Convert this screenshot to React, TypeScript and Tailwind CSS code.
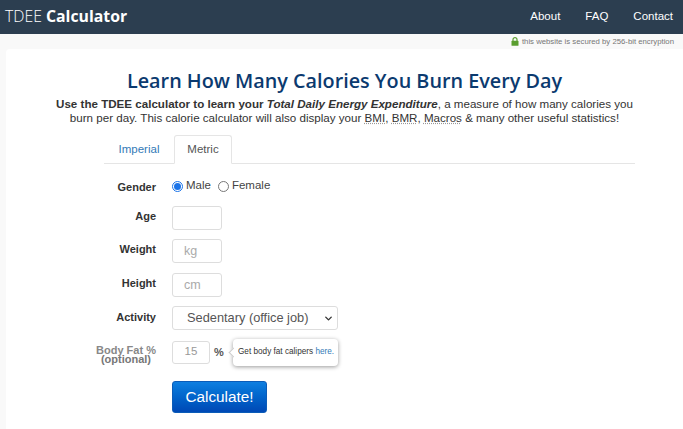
import { ChevronDown } from 'lucide-react';

const sans = "font-['Liberation_Sans',Arial,sans-serif]";

function Row({ label, children, className = '', labelClass = '-mt-[4px]' }: { label: string; children: React.ReactNode; className?: string; labelClass?: string }) {
  return (
    <div className={`flex items-center ${className}`}>
      <label className={`w-[52px] ml-[104px] text-right text-[11px] font-bold text-[#333] ${labelClass}`}>{label}</label>
      <div className="ml-[16px] flex items-center">{children}</div>
    </div>
  );
}

function Box({ placeholder }: { placeholder?: string }) {
  return (
    <div className="w-[50px] h-[24px] border border-[#ddd] rounded-[3px] bg-white pl-[11px] flex items-center text-[12.5px] text-[#aaa]">
      {placeholder}
    </div>
  );
}

export default function App() {
  return (
    <div className={`w-[683px] h-[429px] overflow-hidden bg-[#f9f9f9] ${sans}`}>
      {/* Header */}
      <div className="h-[34px] bg-[#2c3e50] flex items-center justify-between pl-[5px] pr-[10px]">
        <div className="text-[15.8px] text-white font-['Open_Sans',sans-serif]">
          <span className="font-light">TDEE</span> <span className="font-bold">Calculator</span>
        </div>
        <div className="flex gap-[25px] text-[11.5px] text-white">
          <span>About</span>
          <span>FAQ</span>
          <span>Contact</span>
        </div>
      </div>

      {/* Security note */}
      <div className="h-[15px] flex items-center justify-end pr-[9px] gap-[3px] text-[7.75px] text-[#777]">
        <svg width="8" height="9" viewBox="0 0 8 9">
          <path d="M2 4V2.6a2 2 0 0 1 4 0V4" fill="none" stroke="#5a9e2f" strokeWidth="1.2" />
          <rect x="0.5" y="3.8" width="7" height="5" rx="0.6" fill="#5a9e2f" />
        </svg>
        <span>this website is secured by 256-bit encryption</span>
      </div>

      {/* Main card */}
      <div className="ml-[6px] h-[400px] bg-white rounded-tl-[4px]">
        <h1 className="pt-[19px] text-center text-[19.8px] leading-[26px] font-semibold text-[#0b3a6f] font-['Open_Sans',sans-serif]">
          Learn How Many Calories You Burn Every Day
        </h1>
        <p className="mt-[3px] mx-auto w-[600px] text-center text-[11.6px] leading-[14px] text-[#333]">
          <b>Use the TDEE calculator to learn your <i>Total Daily Energy Expenditure</i></b>, a measure of how many calories you burn per day. This calorie calculator will also display your{' '}
          <span className="underline decoration-dotted decoration-[#999]">BMI</span>,{' '}
          <span className="underline decoration-dotted decoration-[#999]">BMR</span>,{' '}
          <span className="underline decoration-dotted decoration-[#999]">Macros</span> &amp; many other useful statistics!
        </p>

        {/* Tabs */}
        <div className="mt-[10px] ml-[98px] w-[531px] h-[29px] border-b border-[#e5e5e5] flex text-[11.5px]">
          <div className="w-[70px] h-[29px] flex items-center justify-center text-[#337ab7]">Imperial</div>
          <div className="w-[58px] h-[29px] flex items-center justify-center bg-white border border-[#e5e5e5] border-b-white rounded-t-[3px] text-[#555]">
            Metric
          </div>
        </div>

        {/* Form */}
        <Row label="Gender" labelClass="mt-[2px]" className="mt-[14px] -ml-[6px] h-[16px]">
          <span className="w-[11px] h-[11px] rounded-full border border-[#1a73e8] flex items-center justify-center">
            <span className="w-[7px] h-[7px] rounded-full bg-[#1a73e8]" />
          </span>
          <span className="ml-[3px] text-[11.5px] text-[#444]">Male</span>
          <span className="ml-[7px] w-[11px] h-[11px] rounded-full border border-[#777]" />
          <span className="ml-[3px] text-[11.5px] text-[#444]">Female</span>
        </Row>
        <Row label="Age" className="mt-[12px] -ml-[6px]"><Box /></Row>
        <Row label="Weight" className="mt-[9px] -ml-[6px]"><Box placeholder="kg" /></Row>
        <Row label="Height" className="mt-[10px] -ml-[6px]"><Box placeholder="cm" /></Row>
        <Row label="Activity" labelClass="-mt-[2px]" className="mt-[9px] -ml-[6px]">
          <div className="relative w-[166px] h-[24px] border border-[#ddd] rounded-[3px] pl-[14px] flex items-center text-[12.8px] text-[#555]">
            Sedentary (office job)
            <ChevronDown size={11} strokeWidth={3} className="absolute right-[3px] top-[6px] text-[#333]" />
          </div>
        </Row>

        {/* Body fat with tip */}
        <div className="mt-[10px] -ml-[6px] flex items-center">
          <div className="w-[70px] ml-[91px] mt-[6px] text-center text-[11px] leading-[9px] font-bold text-[#888] whitespace-nowrap">
            Body Fat %<br /><span className="text-[#777]">(optional)</span>
          </div>
          <div className="ml-[11px] flex items-center relative">
            <div className="w-[38px] h-[23px] border border-[#ddd] rounded-[3px] flex items-center justify-center text-[11.5px] text-[#999]">15</div>
            <span className="ml-[4px] text-[11px] font-bold text-[#555]">%</span>
            <div className="absolute left-[61px] top-[-2px] w-[105px] h-[27px] bg-white rounded-[4px] shadow-[0_1px_4px_rgba(0,0,0,0.4)] flex items-center pl-[5px] text-[8.2px] whitespace-nowrap text-[#333]">
              <span className="absolute -left-[3px] top-[10px] w-[7px] h-[7px] bg-white rotate-45 border-l border-b border-[#ccc]" />
              <span>Get body fat calipers <span className="text-[#337ab7]">here.</span></span>
            </div>
          </div>
        </div>

        <button className="mt-[17px] ml-[166px] w-[95px] h-[32px] rounded-[3px] bg-gradient-to-b from-[#0f7fe0] to-[#0048b5] text-white text-[15.3px] border border-[#0b5cb8]">
          Calculate!
        </button>
      </div>
    </div>
  );
}
